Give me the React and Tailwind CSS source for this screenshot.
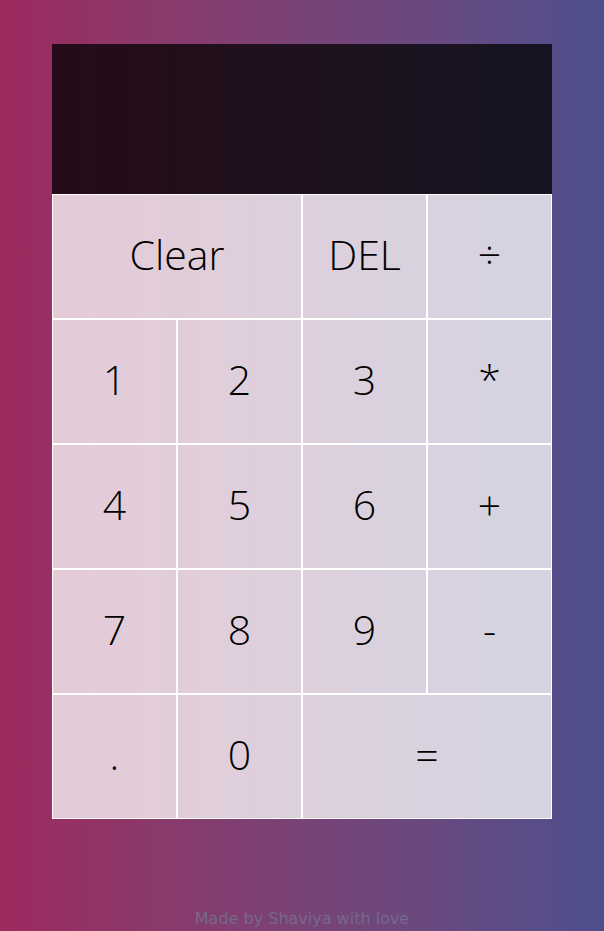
import React from 'react';

const Key = ({ label, wide }) => (
    <button
        type="button"
        className={`flex h-[125px] items-center justify-center border border-white bg-white/75 pb-[3px] text-[41px] font-light text-black cursor-pointer hover:bg-white/90 ${wide ? 'col-span-2' : ''}`}
        style={{ fontFamily: '"Open Sans", "Noto Sans", sans-serif' }}
    >
        {label}
    </button>
);

const App = () => {
    return (
        <div
            className="flex min-h-screen flex-col items-center bg-gradient-to-r from-[#9c295e] to-[#4e4f8d]"
            style={{ fontFamily: '"DejaVu Sans", sans-serif' }}
        >
            <div className="mt-[44px] grid grid-cols-[repeat(4,125px)]">
                <div className="col-span-4 h-[150px] bg-black/75" />
                <Key label="Clear" wide />
                <Key label="DEL" />
                <Key label="÷" />
                <Key label="1" />
                <Key label="2" />
                <Key label="3" />
                <Key label="*" />
                <Key label="4" />
                <Key label="5" />
                <Key label="6" />
                <Key label="+" />
                <Key label="7" />
                <Key label="8" />
                <Key label="9" />
                <Key label="-" />
                <Key label="." />
                <Key label="0" />
                <Key label="=" wide />
            </div>
            <p className="mt-auto text-base leading-6 text-[#76698a]">Made by Shaviya with love</p>
        </div>
    );
};

export default App;
